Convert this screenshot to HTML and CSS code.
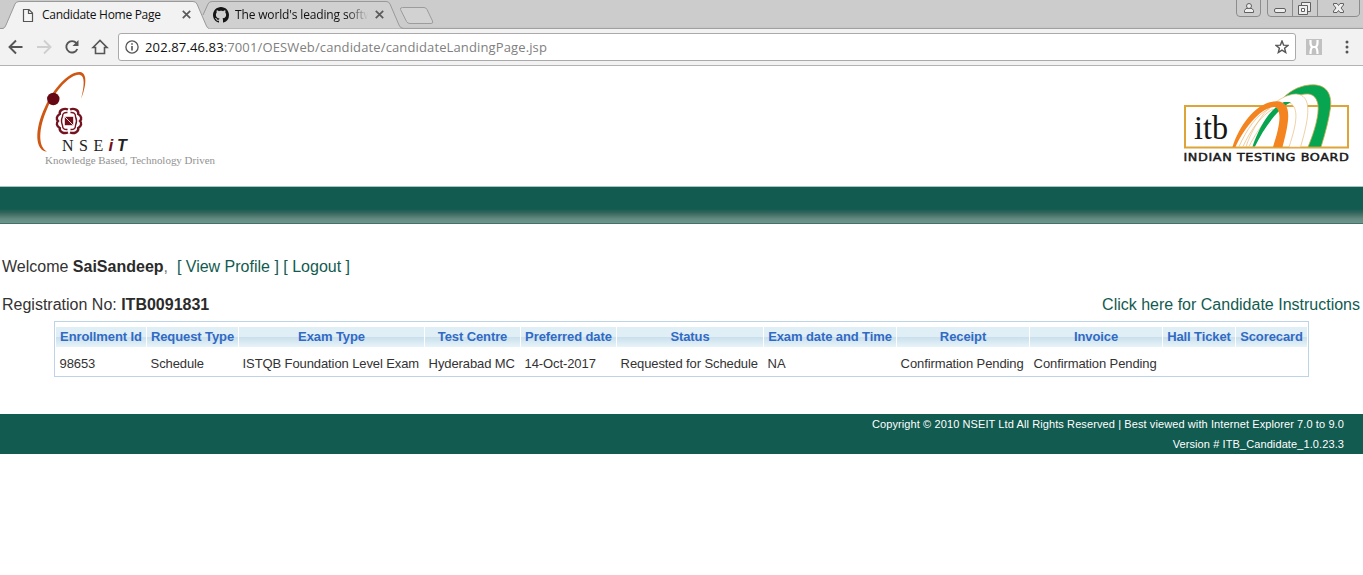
FILE: index.html
```html
<!DOCTYPE html>
<html lang="en">
<head>
<meta charset="utf-8">
<title>Candidate Home Page</title>
<link rel="stylesheet" href="styles.css">
</head>
<body>
<div class="browser">
  <div class="tabstrip">
    <div class="tab tab-active">
      <svg class="tab-shape" width="209" height="29" viewBox="0 0 209 29"><path d="M0 28.5H3Q5 28 6 25L15 4Q16 1.500 19 1.500H193Q196 1.500 197 4L206 25Q207 28 209 28.500V29H0Z" fill="#f2f2f2"/><path d="M0 28.500H3Q5 28 6 25L15 4Q16 1.500 19 1.500H193Q196 1.500 197 4L206 25Q207 28 209 28.500" fill="none" stroke="#999"/></svg>
      <svg class="page-icon" width="12" height="15" viewBox="0 0 12 15"><path d="M1.500 1.500h5.500l3.500 3.500v8.500h-9zM6.500 1.500v4h4" fill="#f5f5f5" stroke="#555" stroke-width="1.200"/></svg>
      <span class="tab-title">Candidate Home Page</span>
      <svg class="close" width="9" height="9" viewBox="0 0 9 9"><path d="M.8.8l7.400 7.400M8.200.8L.8 8.200" stroke="#5a5a5a" stroke-width="1.700"/></svg>
    </div>
    <div class="tab tab-back">
      <svg class="tab-shape" width="206" height="29" viewBox="0 0 206 29"><path d="M4 14L8 4Q9 1.500 12 1.500H186Q189 1.500 190 4L199 25Q200 28 203 28.500H8L2 15Z" fill="#d0d0d0"/><path d="M3 15L8 4Q9 1.500 12 1.500H186Q189 1.500 190 4L199 25Q200 28 203 28.500" fill="none" stroke="#999"/></svg>
      <svg class="github" width="16" height="16" viewBox="0 0 16 16"><path fill="#151515" d="M8 0C3.580 0 0 3.580 0 8c0 3.540 2.290 6.530 5.470 7.590.4.070.55-.17.55-.38 0-.19-.01-.82-.01-1.490-2.010.37-2.530-.49-2.690-.94-.09-.23-.48-.94-.82-1.130-.28-.15-.68-.52-.01-.53.63-.01 1.080.58 1.230.82.72 1.210 1.870.87 2.330.66.070-.52.28-.87.51-1.070-1.780-.2-3.640-.89-3.640-3.950 0-.87.31-1.590.82-2.150-.08-.2-.36-1.020.08-2.120 0 0 .67-.21 2.200.82.64-.18 1.320-.27 2-.27s1.360.09 2 .27c1.530-1.040 2.200-.82 2.200-.82.44 1.100.16 1.920.08 2.120.51.56.82 1.270.82 2.150 0 3.070-1.870 3.750-3.650 3.950.29.25.54.73.54 1.480 0 1.070-.01 1.930-.01 2.200 0 .21.15.46.55.38A8.010 8.010 0 0016 8c0-4.420-3.580-8-8-8z"/></svg>
      <span class="tab-title faded">The world's leading softw</span>
      <svg class="close" width="9" height="9" viewBox="0 0 9 9"><path d="M.8.8l7.400 7.400M8.200.8L.8 8.200" stroke="#5a5a5a" stroke-width="1.700"/></svg>
    </div>
    <svg class="new-tab" width="36" height="18" viewBox="0 0 36 18"><path d="M3.500.5H25Q27 .5 28 2.500L33.500 14Q34.500 16.500 32 16.500H11Q8.500 16.500 7.500 14.500L1.500 2.500Q1 .5 3.500.5Z" fill="#d2d2d2" stroke="#9c9c9c"/></svg>
    <svg class="window-buttons" width="127" height="18" viewBox="0 0 127 18">
      <path d="M.5 0V13Q.5 16.500 4 16.500H21Q24.500 16.500 24.500 13V0M31.500 0V13Q31.500 16.500 35 16.500H119Q123.500 16.500 123.500 13V0M56.500 0V16M81.500 0V16" fill="none" stroke="#8c8c8c"/>
      <path d="M8.500 12.500V10.500L10 8.500H16L17.500 10.500V12.500Z" fill="#eee" stroke="#606060"/><circle cx="13" cy="6" r="2.500" fill="#eee" stroke="#606060"/>
      <rect x="38.500" y="8.500" width="11" height="4" rx="1.500" fill="#eee" stroke="#606060"/>
      <path d="M65.500 2.500H74.500V11.500H65.500Z" fill="#eee" stroke="#606060"/><path d="M62.500 5.500H71.500V14.500H62.500Z" fill="#eee" stroke="#606060"/><path d="M65.500 8.500H68.500V11.500H65.500Z" fill="#fff" stroke="#606060"/>
      <path d="M97.500 3.500H101L102.500 5.500 104 3.500H107.500V5L105 8 107.500 11V12.500H104L102.500 10.500 101 12.500H97.500V11L100 8 97.500 5Z" fill="#eee" stroke="#606060"/>
    </svg>
  </div>
  <div class="toolbar">
    <svg class="nav" width="110" height="36" viewBox="0 0 110 36">
      <g fill="none" stroke="#555" stroke-width="1.900"><path d="M22.500 18H10M16 11.500L9.500 18L16 24.500"/><path stroke="#cfcfcf" d="M37 18H49.500M44 11.500L50.500 18L44 24.500"/><path d="M76.400 14.200A5.700 5.700 0 1 0 77.300 20"/></g>
      <path d="M78.500 11V17H72.500Z" fill="#555"/>
      <path d="M93 18.500L100 11.500L107 18.500H104.500V24.500H95.500V18.500Z" fill="none" stroke="#555" stroke-width="1.600"/>
    </svg>
    <div class="omnibox">
      <svg class="info" width="14" height="14" viewBox="0 0 14 14"><circle cx="7" cy="7" r="6.100" fill="none" stroke="#555" stroke-width="1.300"/><path d="M7 6V10.600M7 3.200V4.800" stroke="#555" stroke-width="1.600"/></svg>
      <span class="url"><span class="host">202.87.46.83</span>:7001/OESWeb/candidate/candidateLandingPage.jsp</span>
      <svg class="star" width="14" height="14" viewBox="0 0 14 14"><path d="M7 1L8.600 5.100 13 5.400 9.600 8.200 10.700 12.500 7 10.100 3.300 12.500 4.400 8.200 1 5.400 5.400 5.100Z" fill="none" stroke="#555" stroke-width="1.400"/></svg>
    </div>
    <svg class="extension" width="16" height="16" viewBox="0 0 16 16"><path d="M0 0H16V16H0Z" fill="#c1c1c1"/><path d="M4.500 1V4Q4.500 7 6.500 8Q4.500 9 4.500 15M11.500 1V4Q11.500 7 9.500 8Q11.500 9 11.500 15M6 8H10" fill="none" stroke="#fff" stroke-width="2.200"/></svg>
    <svg class="menu" width="4" height="14" viewBox="0 0 4 14"><g fill="#555"><circle cx="2" cy="2" r="1.500"/><circle cx="2" cy="7" r="1.500"/><circle cx="2" cy="12" r="1.500"/></g></svg>
  </div>
</div>

<header class="brand">
  <svg class="nseit" width="190" height="106" viewBox="30 66 190 106">
    <path d="M47 151.500C35 151 34 130 45 107C54 87 70 71 80 72C88 73 86 87 81 99C84.500 86 85 76 80 75C72 73 56 89 47.500 108C38 129 38 147 47 151.500Z" fill="#cf5714"/>
    <circle cx="53.300" cy="99" r="6.200" fill="#680714"/>
    <g fill="none" stroke="#741320">
      <path stroke-width="2.400" d="M68 109.500C64 107.800 59 110 59.800 114C56.500 116 56 119 58 121C56 123 56.500 126 59.800 128C59 132 64 134 68 132.500M70 109.500C74 107.800 79 110 78.200 114C81.500 116 82 119 80 121C82 123 81.500 126 78.200 128C79 132 74 134 70 132.500"/>
      <path stroke-width="1.400" d="M67.500 112.500Q62.500 112 62.500 116.500Q60.500 121 62.500 125.500Q62.500 130 67.500 129.500M70.500 112.500Q75.500 112 75.500 116.500Q77.500 121 75.500 125.500Q75.500 130 70.500 129.500"/>
    </g>
    <path d="M64.800 116.800H73.200V125.200H64.800Z" fill="#71101d"/><path d="M65 117L73 125" stroke="#fff" stroke-width=".8"/>
    <g class="logo-name"><text x="62" y="150.500">N</text><text x="79" y="150.500">S</text><text x="93.500" y="150.500">E</text><text x="108.500" y="150.500" class="logo-i">i</text><text x="117" y="150.500" class="logo-t">T</text></g>
    <text class="tagline" x="45" y="163.500" textLength="170" lengthAdjust="spacingAndGlyphs">Knowledge Based, Technology Driven</text>
  </svg>
  <svg class="itb" width="175" height="90" viewBox="1180 80 175 90">
    <rect x="1185" y="106" width="163" height="41.500" fill="#fff" stroke="#dda437" stroke-width="2"/>
    <path d="M1283 98C1292 89 1303 84.500 1314 84.800C1328 85.500 1332 96 1330.500 108Q1328 125 1321 147H1308C1315 130 1319 115 1318 105C1316 93 1308 93 1300 95Z" fill="#07a550" stroke="#cfac50" stroke-width=".8"/>
    <path d="M1246 146.500C1256 118 1276 95 1296 94C1312 95 1310 115 1300.500 147H1289C1297 123 1299 108 1290 103C1277 103 1258 128 1249 146.500Z" fill="#fff" stroke="#e8bd7d" stroke-width=".7"/>
    <path d="M1252.500 146.500C1259 128 1269 109 1284 102L1291 102C1276 110 1263 130 1255 146.500Z" fill="#07a550"/>
    <path d="M1232.500 147C1240 124 1257 101.500 1277 101.300C1292 102 1290 119 1282.500 147H1273C1279 129 1283 111 1275 107C1262 106 1243 129 1235.500 147Z" fill="#f48420"/>
    <path d="M1239 146.500C1247 129 1257 114 1270 108.500M1243 146.500C1251 129 1262 115 1273 109" fill="none" stroke="#e8b977" stroke-width=".7"/>
    <text class="itb-name" x="1194" y="139" textLength="34" lengthAdjust="spacingAndGlyphs">itb</text>
    <text class="board-name" x="1183.500" y="161" textLength="166" lengthAdjust="spacingAndGlyphs">INDIAN TESTING BOARD</text>
  </svg>
</header>
<div class="banner"></div>

<main>
  <p class="welcome">Welcome <b>SaiSandeep</b><span class="comma">,</span>&nbsp; <a>[ View Profile ]</a> <a>[ Logout ]</a></p>
  <div class="registration"><span>Registration No: <b>ITB0091831</b></span><a>Click here for Candidate Instructions</a></div>
  <div class="requests">
    <div class="row head"><span>Enrollment Id</span><span>Request Type</span><span>Exam Type</span><span>Test Centre</span><span>Preferred date</span><span>Status</span><span>Exam date and Time</span><span>Receipt</span><span>Invoice</span><span>Hall Ticket</span><span>Scorecard</span></div>
    <div class="row data"><span>98653</span><span>Schedule</span><span>ISTQB Foundation Level Exam</span><span>Hyderabad MC</span><span>14-Oct-2017</span><span>Requested for Schedule</span><span>NA</span><span>Confirmation Pending</span><span>Confirmation Pending</span><span></span><span></span></div>
  </div>
</main>
<footer class="footer"><div>Copyright © 2010 NSEIT Ltd All Rights Reserved | Best viewed with Internet Explorer 7.0 to 9.0</div><div>Version # ITB_Candidate_1.0.23.3</div></footer>
</body>
</html>
```
FILE: styles.css
```css
* { box-sizing: border-box; }
body { margin: 0; background: #fff; color: #333; font-family: "Liberation Sans", Arial, sans-serif; overflow: hidden; }
svg { display: block; flex: none; }
.browser { height: 66px; background: #f2f2f2; border-bottom: 1px solid #b3b3b3; font-family: "Open Sans", "Noto Sans", sans-serif; }
.tabstrip { display: flex; height: 29px; background: linear-gradient(#ccc 0 26px, #c5c5c5); border-bottom: 1px solid #a0a0a0; }
.tab { position: relative; display: flex; align-items: center; height: 29px; flex: none; }
.tab-shape { position: absolute; left: 0; top: 0; }
.tab-active { width: 209px; padding-left: 22px; z-index: 1; }
.tab-back { width: 206px; margin-left: -9px; padding-left: 13px; }
.page-icon, .github, .close, .tab-title { position: relative; }
.tab-title { width: 132px; margin-left: 8px; font-size: 12px; line-height: 18px; color: #111; white-space: nowrap; letter-spacing: -.3px; }
.page-icon { margin-top: 1px; }
.tab-active .close { margin-left: 8px; }
.tab-back .tab-title { margin-left: 6px; width: 133px; letter-spacing: -.15px; }
.faded { mask-image: linear-gradient(90deg, #000 112px, transparent 133px); }
.tab-back .close { margin-left: 7px; }
.new-tab { margin: 7px 0 0 -7px; }
.window-buttons { margin-left: auto; }
.toolbar { display: flex; align-items: center; height: 36px; }
.omnibox { display: flex; align-items: center; width: 1178px; height: 28px; margin-left: 8px; padding: 0 6px; background: #fff; border: 1px solid #aaa; border-radius: 3px; }
.url { flex: 1; margin-left: 6px; color: #808080; font-size: 13px; line-height: 20px; letter-spacing: .13px; }
.host { color: #111; }
.extension { margin-left: 10px; }
.menu { margin-left: 23px; }
.brand { display: flex; justify-content: space-between; height: 120px; padding: 0 8px 0 30px; }
.itb { margin-top: 14px; }
.logo-name { font: 16px "Liberation Serif", serif; fill: #222; }
.logo-i { font: italic bold 17px "Liberation Sans", sans-serif; fill: #711020; }
.logo-t { font: italic bold 16px "Liberation Sans", sans-serif; }
.tagline { font: 11px "Liberation Serif", serif; fill: #929292; }
.itb-name { font: 33px "Liberation Serif", serif; fill: #171717; }
.board-name { font: 10.500px "DejaVu Sans", sans-serif; letter-spacing: .5px; fill: #171717; stroke: #171717; stroke-width: .45px; }
.banner { height: 38px; background: linear-gradient(#a9c5bf 0 1px, #125b50 1px 23px, #36675d 27px, #638b81 33px, #70948b 37px, #3c746b 37px); }
main { padding-top: 33px; height: 190px; }
.welcome { margin: 0 0 18px 2px; font-size: 16px; line-height: 20px; }
.welcome b, .registration b { color: #2b2b2b; }
.comma { color: #777; }
a { color: #125b50; }
.registration { display: flex; justify-content: space-between; padding: 0 3px 0 2px; font-size: 16px; line-height: 20px; }
.requests { width: 1255px; height: 56px; margin: 6px 0 0 54px; padding: 5px 1px 0; border: 1px solid #bdd4e6; font-size: 13px; letter-spacing: -.1px; }
.row { display: grid; grid-template-columns: 90px 91px 185px 95px 95px 146px 132px 132px 132px 72px 71px; column-gap: 1px; white-space: nowrap; }
.head { height: 20px; color: #316ac5; font-weight: bold; text-align: center; line-height: 19px; }
.head span { background: linear-gradient(#e0eef5 0 10px, #c9dfec 10px, #e8f4f9); }
.data { line-height: 18px; padding-top: 8px; }
.data span { padding-left: 3.600px; }
.footer { height: 40px; padding-right: 19px; background: #125b50; color: #fff; font-size: 11px; line-height: 20px; letter-spacing: .1px; text-align: right; }
```
